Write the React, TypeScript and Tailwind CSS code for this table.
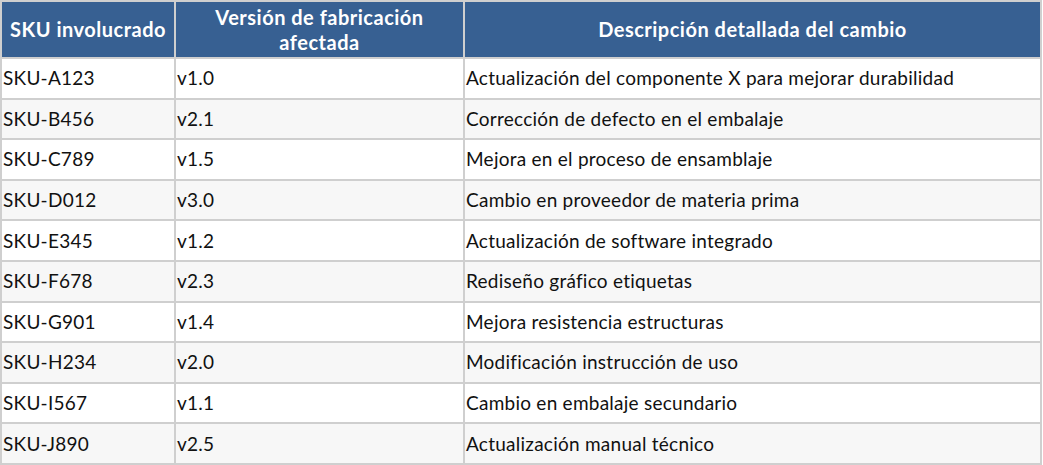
const rows = [
  ["SKU-A123", "v1.0", "Actualización del componente X para mejorar durabilidad"],
  ["SKU-B456", "v2.1", "Corrección de defecto en el embalaje"],
  ["SKU-C789", "v1.5", "Mejora en el proceso de ensamblaje"],
  ["SKU-D012", "v3.0", "Cambio en proveedor de materia prima"],
  ["SKU-E345", "v1.2", "Actualización de software integrado"],
  ["SKU-F678", "v2.3", "Rediseño gráfico etiquetas"],
  ["SKU-G901", "v1.4", "Mejora resistencia estructuras"],
  ["SKU-H234", "v2.0", "Modificación instrucción de uso"],
  ["SKU-I567", "v1.1", "Cambio en embalaje secundario"],
  ["SKU-J890", "v2.5", "Actualización manual técnico"],
];

export default function App() {
  return (
    <div className="w-[1043px] bg-white font-['Lato','Liberation_Sans',sans-serif]">
      <table className="w-[1042px] table-fixed border-collapse">
        <colgroup>
          <col className="w-[174px]" />
          <col className="w-[289px]" />
          <col />
        </colgroup>
        <thead>
          <tr className="h-[57px] bg-[#376092] text-[20px] font-bold leading-[25px] tracking-[0.5px] text-white">
            <th className="border-2 border-[#cfcfcf] px-1 text-center">SKU involucrado</th>
            <th className="border-2 border-[#cfcfcf] px-6 text-center">Versión de fabricación afectada</th>
            <th className="border-2 border-[#cfcfcf] px-1 text-center">Descripción detallada del cambio</th>
          </tr>
        </thead>
        <tbody>
          {rows.map((r, i) => (
            <tr
              key={r[0]}
              className={`h-[40.6px] text-[19px] leading-[22px] tracking-[0.25px] text-[#111] ${i % 2 ? "bg-[#f7f7f7]" : "bg-white"}`}
            >
              {r.map((c, j) => (
                <td key={j} className="border-2 border-[#cfcfcf] px-[1px] py-0 text-left">
                  {c}
                </td>
              ))}
            </tr>
          ))}
        </tbody>
      </table>
    </div>
  );
}
